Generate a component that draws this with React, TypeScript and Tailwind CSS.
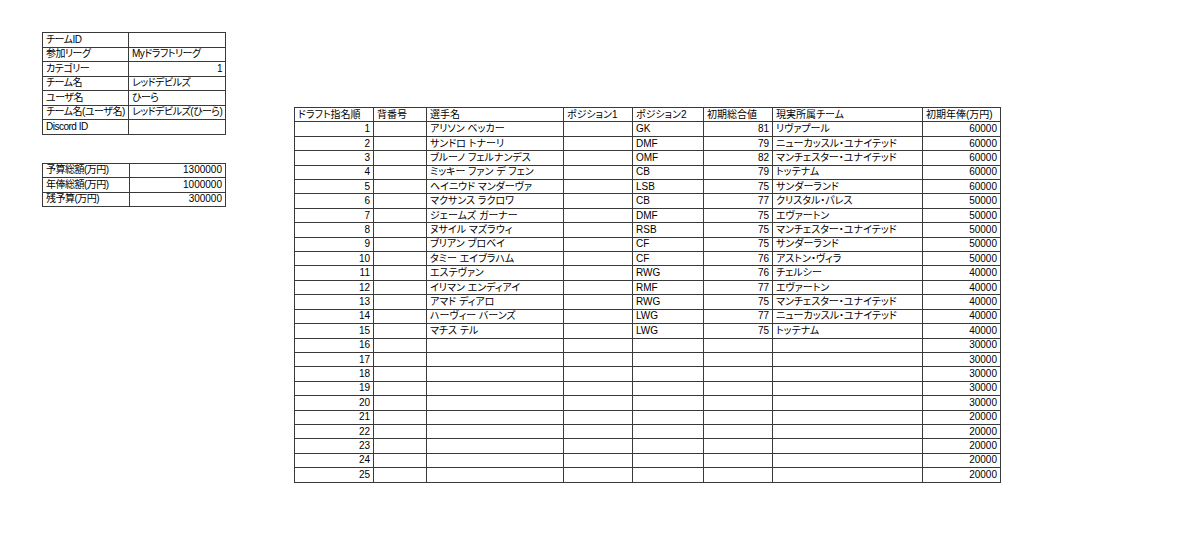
import React from "react";

type Pick = {
  no: number;
  name?: string;
  pos2?: string;
  ovr?: number;
  club?: string;
  salary: number;
};

const picks: Pick[] = [
  { no: 1, name: "アリソン ベッカー", pos2: "GK", ovr: 81, club: "リヴァプール", salary: 60000 },
  { no: 2, name: "サンドロ トナーリ", pos2: "DMF", ovr: 79, club: "ニューカッスル・ユナイテッド", salary: 60000 },
  { no: 3, name: "ブルーノ フェルナンデス", pos2: "OMF", ovr: 82, club: "マンチェスター・ユナイテッド", salary: 60000 },
  { no: 4, name: "ミッキー ファン デ フェン", pos2: "CB", ovr: 79, club: "トッテナム", salary: 60000 },
  { no: 5, name: "ヘイニウド マンダーヴァ", pos2: "LSB", ovr: 75, club: "サンダーランド", salary: 60000 },
  { no: 6, name: "マクサンス ラクロワ", pos2: "CB", ovr: 77, club: "クリスタル・パレス", salary: 50000 },
  { no: 7, name: "ジェームズ ガーナー", pos2: "DMF", ovr: 75, club: "エヴァートン", salary: 50000 },
  { no: 8, name: "ヌサイル マズラウィ", pos2: "RSB", ovr: 75, club: "マンチェスター・ユナイテッド", salary: 50000 },
  { no: 9, name: "ブリアン ブロベイ", pos2: "CF", ovr: 75, club: "サンダーランド", salary: 50000 },
  { no: 10, name: "タミー エイブラハム", pos2: "CF", ovr: 76, club: "アストン・ヴィラ", salary: 50000 },
  { no: 11, name: "エステヴァン", pos2: "RWG", ovr: 76, club: "チェルシー", salary: 40000 },
  { no: 12, name: "イリマン エンディアイ", pos2: "RMF", ovr: 77, club: "エヴァートン", salary: 40000 },
  { no: 13, name: "アマド ディアロ", pos2: "RWG", ovr: 75, club: "マンチェスター・ユナイテッド", salary: 40000 },
  { no: 14, name: "ハーヴィー バーンズ", pos2: "LWG", ovr: 77, club: "ニューカッスル・ユナイテッド", salary: 40000 },
  { no: 15, name: "マチス テル", pos2: "LWG", ovr: 75, club: "トッテナム", salary: 40000 },
  { no: 16, salary: 30000 },
  { no: 17, salary: 30000 },
  { no: 18, salary: 30000 },
  { no: 19, salary: 30000 },
  { no: 20, salary: 30000 },
  { no: 21, salary: 20000 },
  { no: 22, salary: 20000 },
  { no: 23, salary: 20000 },
  { no: 24, salary: 20000 },
  { no: 25, salary: 20000 },
];

const teamInfo: [string, string, boolean?][] = [
  ["チームID", ""],
  ["参加リーグ", "Myドラフトリーグ"],
  ["カテゴリー", "1", true],
  ["チーム名", "レッドデビルズ"],
  ["ユーザ名", "ひーら"],
  ["チーム名(ユーザ名)", "レッドデビルズ(ひーら)"],
  ["Discord ID", ""],
];

const budget: [string, string][] = [
  ["予算総額(万円)", "1300000"],
  ["年俸総額(万円)", "1000000"],
  ["残予算(万円)", "300000"],
];

const cell = "border border-[#3a3a3a] px-[3px] py-0 leading-none whitespace-nowrap overflow-hidden";

export default function App() {
  return (
    <div
      className="w-[1200px] h-[551px] bg-white text-black text-[10px] [font-feature-settings:'palt'] overflow-hidden"
      style={{ fontFamily: '"Liberation Sans", "Noto Sans CJK JP", sans-serif' }}
    >
      <div className="flex items-start pl-[42px] pt-[32px]">
        {/* team info + budget */}
        <div className="w-[183px] flex flex-col gap-[28px] tracking-[-0.5px]">
          <table className="table-fixed border-collapse w-[183px]">
            <colgroup>
              <col className="w-[86px]" />
              <col className="w-[97px]" />
            </colgroup>
            <tbody>
              {teamInfo.map(([k, v, num]) => (
                <tr key={k} className="h-[14.5px]">
                  <td className={cell}>{k}</td>
                  <td className={`${cell} ${num ? "text-right" : ""}`}>{v}</td>
                </tr>
              ))}
            </tbody>
          </table>
          <table className="table-fixed border-collapse w-[183px]">
            <colgroup>
              <col className="w-[87px]" />
              <col className="w-[96px]" />
            </colgroup>
            <tbody>
              {budget.map(([k, v]) => (
                <tr key={k} className="h-[14.5px]">
                  <td className={cell}>{k}</td>
                  <td className={`${cell} text-right tracking-normal`}>{v}</td>
                </tr>
              ))}
            </tbody>
          </table>
        </div>

        {/* draft list */}
        <table className="table-fixed border-collapse w-[706px] ml-[69px] mt-[75px]">
          <colgroup>
            <col className="w-[79px]" />
            <col className="w-[53px]" />
            <col className="w-[137px]" />
            <col className="w-[69px]" />
            <col className="w-[71px]" />
            <col className="w-[69px]" />
            <col className="w-[150px]" />
            <col className="w-[78px]" />
          </colgroup>
          <thead>
            <tr className="h-[14.42px]">
              <th className={`${cell} text-left font-normal`}>ドラフト指名順</th>
              <th className={`${cell} text-left font-normal`}>背番号</th>
              <th className={`${cell} text-left font-normal`}>選手名</th>
              <th className={`${cell} text-left font-normal`}>ポジション1</th>
              <th className={`${cell} text-left font-normal`}>ポジション2</th>
              <th className={`${cell} text-left font-normal`}>初期総合値</th>
              <th className={`${cell} text-left font-normal`}>現実所属チーム</th>
              <th className={`${cell} text-left font-normal`}>初期年俸(万円)</th>
            </tr>
          </thead>
          <tbody>
            {picks.map((p) => (
              <tr key={p.no} className="h-[14.42px]">
                <td className={`${cell} text-right`}>{p.no}</td>
                <td className={cell}></td>
                <td className={cell}>{p.name}</td>
                <td className={cell}></td>
                <td className={cell}>{p.pos2}</td>
                <td className={`${cell} text-right`}>{p.ovr}</td>
                <td className={cell}>{p.club}</td>
                <td className={`${cell} text-right`}>{p.salary}</td>
              </tr>
            ))}
          </tbody>
        </table>
      </div>
    </div>
  );
}
